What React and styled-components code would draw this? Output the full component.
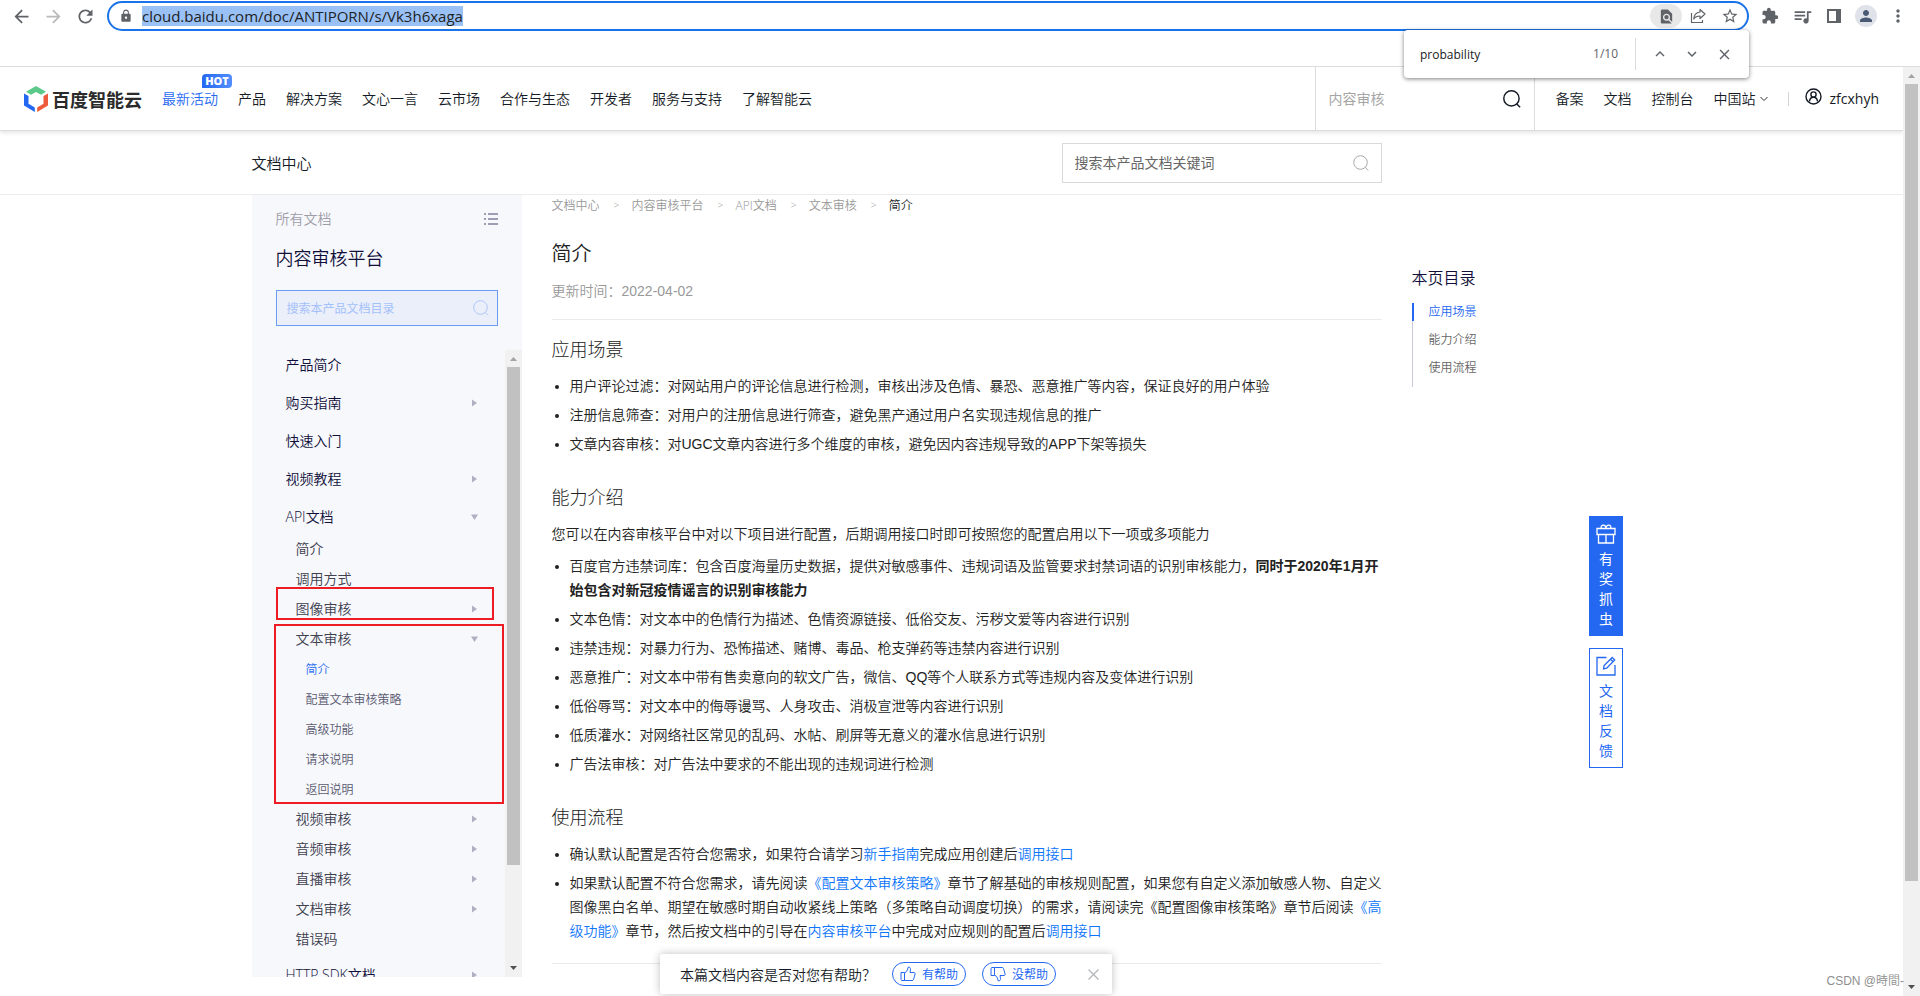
import React, { useState } from 'react';
import styled, { createGlobalStyle } from 'styled-components';
import {
    MdArrowBack,
    MdArrowForward,
    MdRefresh,
    MdLock,
    MdFindInPage,
    MdStarBorder,
    MdExtension,
    MdQueueMusic,
    MdPerson,
    MdMoreVert,
    MdKeyboardArrowUp,
    MdKeyboardArrowDown,
    MdClose,
} from 'react-icons/md';

const NAV_ITEMS = ['产品', '解决方案', '文心一言', '云市场', '合作与生态', '开发者', '服务与支持', '了解智能云'];

const MENU = [
    { name: '产品简介' },
    { name: '购买指南', arrow: 'right' },
    { name: '快速入门' },
    { name: '视频教程', arrow: 'right' },
    {
        name: 'API文档',
        arrow: 'down',
        children: [
            { name: '简介' },
            { name: '调用方式' },
            { name: '图像审核', arrow: 'right' },
            {
                name: '文本审核',
                arrow: 'down',
                children: [
                    { name: '简介', active: true },
                    { name: '配置文本审核策略' },
                    { name: '高级功能' },
                    { name: '请求说明' },
                    { name: '返回说明' },
                ],
            },
            { name: '视频审核', arrow: 'right' },
            { name: '音频审核', arrow: 'right' },
            { name: '直播审核', arrow: 'right' },
            { name: '文档审核', arrow: 'right' },
            { name: '错误码' },
        ],
    },
    { name: 'HTTP SDK文档', arrow: 'right' },
];

const CRUMBS = ['文档中心', '内容审核平台', 'API文档', '文本审核'];

function SearchIcon({ size = 16, width = 1 }) {
    return (
        <svg width={size} height={size} viewBox="0 0 16 16" fill="none" stroke="currentColor" strokeWidth={width}>
            <circle cx="7.5" cy="7.5" r="6.8" />
            <path d="M12 12.2l3.2 3.2" />
        </svg>
    );
}

function Arrow({ type }) {
    return (
        <svg width="7" height="8" viewBox="0 0 7 8" fill="#b0b0c3">
            {type === 'right' ? <path d="M1 .5l5 3.5-5 3.5z" /> : <path d="M0 1.5h7L3.5 7z" />}
        </svg>
    );
}

function Thumb({ down }) {
    return (
        <svg width="16" height="16" viewBox="0 0 16 16" fill="none" stroke="currentColor" strokeLinejoin="round">
            <g transform={down ? 'matrix(1 0 0 -1 0 16)' : undefined}>
                <path d="M1 6.5h3.5v8H1.8L1 13.8z" />
                <path d="M4.5 7.5L7.5 4l.6-2.8c1.6-.4 2.6.6 2.4 2.2L10 6.5h4c.9 0 1.3.6 1.1 1.4L13.5 13.5c-.2.7-.6 1-1.3 1H4.5z" />
            </g>
        </svg>
    );
}

function Menu({ items, level }) {
    return (
        <MenuList $level={level}>
            {items.map((item) => (
                <MenuItem key={item.name} $level={level}>
                    <MenuLink href="#" $level={level} $active={item.active}>
                        {item.name}
                        {item.arrow && <Arrow type={item.arrow} />}
                    </MenuLink>
                    {item.children && <Menu items={item.children} level={level + 1} />}
                </MenuItem>
            ))}
        </MenuList>
    );
}

function ScrollBar({ size }) {
    return (
        <Track>
            <svg width="17" height="17" viewBox="0 0 17 17" fill="#a3a3a3"><path d="M5 11h7L8.5 7z" /></svg>
            <TrackBody><TrackThumb $size={size} /></TrackBody>
            <svg width="17" height="17" viewBox="0 0 17 17" fill="#505050"><path d="M5 6h7l-3.5 4z" /></svg>
        </Track>
    );
}

function Browser() {
    const [url, setUrl] = useState('cloud.baidu.com/doc/ANTIPORN/s/Vk3h6xaga');
    const [keyword, setKeyword] = useState('probability');

    return (
        <Toolbar>
            <ToolButton $width={32} aria-label="back"><MdArrowBack size={21} /></ToolButton>
            <ToolButton $width={32} $color="#bababa" aria-label="forward"><MdArrowForward size={21} /></ToolButton>
            <ToolButton $width={32} aria-label="reload"><MdRefresh size={21} /></ToolButton>
            <Omnibox>
                <MdLock size={14} />
                <UrlInput aria-label="url" value={url} onChange={(e) => setUrl(e.target.value)} />
                <Spacer />
                <ToolButton $width={32} $fill="#e8e8e8" aria-label="find"><MdFindInPage size={17} /></ToolButton>
                <ToolButton $width={32} aria-label="share">
                    <svg width="16" height="16" viewBox="0 0 16 16" fill="none" stroke="currentColor" strokeWidth="1.2">
                        <path d="M1.500 5v9.500h11V12" />
                        <path d="M10 1.500l5 4.500-5 4.500V8C7 8 5 9 3.800 11 4 7.500 6 4.500 10 4z" strokeLinejoin="round" />
                    </svg>
                </ToolButton>
                <ToolButton $width={32} aria-label="bookmark"><MdStarBorder size={18} /></ToolButton>
            </Omnibox>
            <ToolGroup>
                <ToolButton $width={32} aria-label="extensions"><MdExtension size={18} /></ToolButton>
                <ToolButton $width={32} aria-label="media"><MdQueueMusic size={21} /></ToolButton>
                <ToolButton $width={32} aria-label="side panel">
                    <svg width="14" height="14" viewBox="0 0 14 14">
                        <path d="M1 1h12v12H1z" fill="none" stroke="currentColor" strokeWidth="2" />
                        <path d="M9 1h4v12H9z" fill="currentColor" />
                    </svg>
                </ToolButton>
                <ToolButton $width={32} aria-label="profile"><Avatar><MdPerson size={18} /></Avatar></ToolButton>
                <ToolButton $width={32} aria-label="more"><MdMoreVert size={20} /></ToolButton>
            </ToolGroup>
            <FindBar>
                <FindInput aria-label="find in page" value={keyword} onChange={(e) => setKeyword(e.target.value)} />
                <FindCount>1/10</FindCount>
                <ToolButton $width={32} aria-label="previous"><MdKeyboardArrowUp size={18} /></ToolButton>
                <ToolButton $width={32} aria-label="next"><MdKeyboardArrowDown size={18} /></ToolButton>
                <ToolButton $width={32} aria-label="close"><MdClose size={17} /></ToolButton>
            </FindBar>
        </Toolbar>
    );
}

function Header() {
    return (
        <HeaderBar>
            <Logo href="#">
                <svg width="24" height="26" viewBox="0 0 24 26">
                    <path d="M12 0l10 5.700-5 3L12 6 7 8.700l-5-3z" fill="#5bc98a" />
                    <path d="M0 7.500l4.500 2.600v7.700l6.300 3.700V26L0 19.500z" fill="#2468f2" />
                    <path d="M24 7.500l-4.500 2.600v7.700l-6.300 3.700V26L24 19.500z" fill="#ee5b3c" />
                </svg>
                百度智能云
            </Logo>
            <NavLinks>
                <NavLink href="#" $active>最新活动<HotBadge>HOT</HotBadge></NavLink>
                {NAV_ITEMS.map((name) => <NavLink href="#" key={name}>{name}</NavLink>)}
            </NavLinks>
            <HeaderSearch>
                <HeaderInput aria-label="搜索" placeholder="内容审核" />
                <SearchIcon size={18} width={1.3} />
            </HeaderSearch>
            <UserLinks>
                <NavLink href="#">备案</NavLink>
                <NavLink href="#">文档</NavLink>
                <NavLink href="#">控制台</NavLink>
                <NavLink href="#">
                    中国站
                    <svg width="8" height="6" viewBox="0 0 8 6" fill="none" stroke="#333"><path d="M.5 1L4 4.5 7.5 1" /></svg>
                </NavLink>
                <Divider />
                <UserName href="#">
                    <svg width="17" height="17" viewBox="0 0 17 17" fill="none" stroke="#151b26" strokeWidth="1.4">
                        <circle cx="8.5" cy="8.5" r="7.5" />
                        <circle cx="8.5" cy="6.5" r="2.6" />
                        <path d="M4.500 13.500C4.700 10.500 6 9.200 8.500 9.200s3.800 1.300 4 4.300" />
                    </svg>
                    zfcxhyh
                </UserName>
            </UserLinks>
        </HeaderBar>
    );
}

function Article() {
    return (
        <ArticleBox>
            <Breadcrumb>
                {CRUMBS.map((name) => (
                    <React.Fragment key={name}>
                        <Crumb href="#">{name}</Crumb>
                        <CrumbMark>&gt;</CrumbMark>
                    </React.Fragment>
                ))}
                <Crumb href="#" $current>简介</Crumb>
            </Breadcrumb>
            <Title>简介</Title>
            <UpdateTime>更新时间：2022-04-02</UpdateTime>
            <Line />
            <SubTitle $first>应用场景</SubTitle>
            <List>
                <ListItem>用户评论过滤：对网站用户的评论信息进行检测，审核出涉及色情、暴恐、恶意推广等内容，保证良好的用户体验</ListItem>
                <ListItem>注册信息筛查：对用户的注册信息进行筛查，避免黑产通过用户名实现违规信息的推广</ListItem>
                <ListItem>文章内容审核：对UGC文章内容进行多个维度的审核，避免因内容违规导致的APP下架等损失</ListItem>
            </List>
            <SubTitle>能力介绍</SubTitle>
            <Paragraph>您可以在内容审核平台中对以下项目进行配置，后期调用接口时即可按照您的配置启用以下一项或多项能力</Paragraph>
            <List>
                <ListItem>
                    百度官方违禁词库：包含百度海量历史数据，提供对敏感事件、违规词语及监管要求封禁词语的识别审核能力，
                    <strong>同时于2020年1月开始包含对新冠疫情谣言的识别审核能力</strong>
                </ListItem>
                <ListItem>文本色情：对文本中的色情行为描述、色情资源链接、低俗交友、污秽文爱等内容进行识别</ListItem>
                <ListItem>违禁违规：对暴力行为、恐怖描述、赌博、毒品、枪支弹药等违禁内容进行识别</ListItem>
                <ListItem>恶意推广：对文本中带有售卖意向的软文广告，微信、QQ等个人联系方式等违规内容及变体进行识别</ListItem>
                <ListItem>低俗辱骂：对文本中的侮辱谩骂、人身攻击、消极宣泄等内容进行识别</ListItem>
                <ListItem>低质灌水：对网络社区常见的乱码、水帖、刷屏等无意义的灌水信息进行识别</ListItem>
                <ListItem>广告法审核：对广告法中要求的不能出现的违规词进行检测</ListItem>
            </List>
            <SubTitle>使用流程</SubTitle>
            <List>
                <ListItem>
                    确认默认配置是否符合您需求，如果符合请学习<TextLink href="#">新手指南</TextLink>完成应用创建后<TextLink href="#">调用接口</TextLink>
                </ListItem>
                <ListItem>
                    如果默认配置不符合您需求，请先阅读<TextLink href="#">《配置文本审核策略》</TextLink>章节了解基础的审核规则配置，如果您有自定义添加敏感人物、自定义图像黑白名单、期望在敏感时期自动收紧线上策略（多策略自动调度切换）的需求，请阅读完《配置图像审核策略》章节后阅读<TextLink href="#">《高级功能》</TextLink>章节，然后按文档中的引导在<TextLink href="#">内容审核平台</TextLink>中完成对应规则的配置后<TextLink href="#">调用接口</TextLink>
                </ListItem>
            </List>
            <Line />
        </ArticleBox>
    );
}

function App() {
    return (
        <>
            <GlobalStyle />
            <Screen>
                <Browser />
                <Viewport>
                    <Page>
                        <Header />
                        <DocBar>
                            <DocBarInner>
                                <DocHome href="#">文档中心</DocHome>
                                <SearchBox>
                                    <SearchInput aria-label="搜索本产品文档关键词" placeholder="搜索本产品文档关键词" />
                                    <SearchIcon />
                                </SearchBox>
                            </DocBarInner>
                        </DocBar>
                        <Content>
                            <Sidebar>
                                <SidebarTop>
                                    <AllDocs href="#">
                                        所有文档
                                        <svg width="14" height="12" viewBox="0 0 14 12" fill="#9f9db3">
                                            <path d="M0 0h2v2H0zM4 0h10v2H4zM0 5h2v2H0zM4 5h10v2H4zM0 10h2v2H0zM4 10h10v2H4z" />
                                        </svg>
                                    </AllDocs>
                                    <ProductName>内容审核平台</ProductName>
                                    <MenuSearch>
                                        <MenuInput aria-label="搜索本产品文档目录" placeholder="搜索本产品文档目录" />
                                        <SearchIcon />
                                    </MenuSearch>
                                </SidebarTop>
                                <MenuScroll>
                                    <Menu items={MENU} level={1} />
                                    <ScrollBar size="84%" />
                                </MenuScroll>
                                <RedMark $top={392} $left={24} $width={218} $height={33} />
                                <RedMark $top={429} $left={22} $width={230} $height={180} />
                            </Sidebar>
                            <Article />
                            <Toc>
                                <TocTitle>本页目录</TocTitle>
                                <TocList>
                                    <TocLink href="#" $active>应用场景</TocLink>
                                    <TocLink href="#">能力介绍</TocLink>
                                    <TocLink href="#">使用流程</TocLink>
                                </TocList>
                            </Toc>
                        </Content>
                    </Page>
                    <ScrollBar size="89%" />
                </Viewport>
                <FloatButtons>
                    <FloatButton $fill>
                        <svg width="20" height="20" viewBox="0 0 20 20" fill="none" stroke="currentColor" strokeWidth="1.3">
                            <path d="M1 4.500h18v6H1zM2.500 10.500h15V19h-15zM10 10.500V19" />
                            <path d="M5.500 4.500C4.500 3 5.500 1.200 7.300 1.200 9 1.200 10 2.500 10 4.500c0-2 1-3.300 2.700-3.300 1.800 0 2.800 1.800 1.800 3.300" />
                        </svg>
                        有奖抓虫
                    </FloatButton>
                    <FloatButton>
                        <svg width="20" height="20" viewBox="0 0 20 20" fill="none" stroke="currentColor" strokeWidth="1.3">
                            <path d="M10.500 1.500H1V19h18V9" />
                            <path d="M7.500 13l.6-3.400L16.200 1.500l2.500 2.500-8 8.200zM14.500 3.200L17 5.700" />
                        </svg>
                        文档反馈
                    </FloatButton>
                </FloatButtons>
                <HelpBar>
                    <HelpText>本篇文档内容是否对您有帮助？</HelpText>
                    <HelpButton><Thumb />有帮助</HelpButton>
                    <HelpButton><Thumb down />没帮助</HelpButton>
                    <HelpClose aria-label="关闭">
                        <svg width="11" height="11" viewBox="0 0 11 11" stroke="#b4b6ba" strokeWidth="1.3"><path d="M.5.5l10 10M10.500.5l-10 10" /></svg>
                    </HelpClose>
                </HelpBar>
                <Watermark>CSDN @時間-</Watermark>
            </Screen>
        </>
    );
}

const GlobalStyle = createGlobalStyle`
    * {
        box-sizing: border-box;
    }

    body {
        margin: 0;
        background: #fff;
        color: #151b26;
        font-family: "Open Sans", "Noto Sans CJK SC", sans-serif;
        font-size: 14px;
        text-spacing-trim: space-all;
    }

    a {
        color: inherit;
        text-decoration: none;
    }

    button, input {
        margin: 0;
        padding: 0;
        border: 0;
        outline: 0;
        background: none;
        color: inherit;
        font-family: inherit;
    }

    ul, h1, h2, h3, p {
        margin: 0;
        padding: 0;
    }

    h1, h2, h3 {
        font-weight: 300;
    }

    svg {
        flex: none;
    }
`;

const Screen = styled.div`
    position: relative;
    display: flex;
    flex-direction: column;
    height: 100vh;
    overflow: hidden;
    font-weight: 350;
`;

const Toolbar = styled.div`
    position: relative;
    z-index: 2;
    display: flex;
    align-items: flex-start;
    height: 67px;
    padding: 1px 6px 1px 5px;
    border-bottom: 1px solid #dadce0;
    color: #5f6368;
`;

const ToolButton = styled.button`
    display: flex;
    flex: none;
    align-items: center;
    justify-content: center;
    width: ${(props) => props.$width}px;
    height: ${(props) => (props.$fill ? 24 : 30)}px;
    border-radius: 12px;
    background: ${(props) => props.$fill || 'none'};
    color: ${(props) => props.$color || 'inherit'};
`;

const ToolGroup = styled.div`
    display: flex;
    margin-left: 5px;
`;

const Omnibox = styled.div`
    display: flex;
    flex: 1;
    align-items: center;
    height: 30px;
    margin-left: 6px;
    padding: 0 1px 0 10px;
    border: 2px solid #1a73e8;
    border-radius: 15px;
`;

const UrlInput = styled.input`
    field-sizing: content;
    height: 20px;
    margin-left: 9px;
    background: #9ac1f5;
    color: #202124;
    font-size: 15px;
`;

const Spacer = styled.div`
    flex: 1;
`;

const Avatar = styled.span`
    display: flex;
    align-items: center;
    justify-content: center;
    width: 22px;
    height: 22px;
    border-radius: 50%;
    background: #dfe2e9;
    color: #4a5a75;
`;

const FindBar = styled.div`
    position: absolute;
    top: 30px;
    right: 171px;
    display: flex;
    align-items: center;
    width: 345px;
    height: 48px;
    padding: 0 9px 0 16px;
    border-radius: 4px;
    background: #fff;
    box-shadow: 0 1px 4px rgba(0, 0, 0, 0.5);
`;

const FindInput = styled.input`
    flex: 1;
    min-width: 0;
    color: #202124;
    font-size: 12px;
`;

const FindCount = styled.span`
    height: 32px;
    margin-right: 8px;
    padding-right: 17px;
    border-right: 1px solid #dadce0;
    font-size: 12px;
    font-weight: 400;
    line-height: 32px;
`;

const Viewport = styled.div`
    display: flex;
    flex: 1;
    min-height: 0;
`;

const Page = styled.div`
    flex: 1;
    min-width: 0;
    overflow: hidden;
`;

const Track = styled.div`
    display: flex;
    flex: none;
    flex-direction: column;
    width: 17px;
    background: #f1f1f1;
`;

const TrackBody = styled.div`
    flex: 1;
    padding: 0 2px;
`;

const TrackThumb = styled.div`
    height: ${(props) => props.$size};
    background: #c1c1c1;
`;

const HeaderBar = styled.header`
    position: relative;
    display: flex;
    align-items: center;
    height: 64px;
    padding-left: 24px;
    border-bottom: 1px solid #dcdcdc;
    box-shadow: 0 2px 4px rgba(0, 0, 0, 0.1);
`;

const Logo = styled.a`
    display: flex;
    align-items: center;
    gap: 4px;
    color: #2b2b2b;
    font-size: 18px;
    font-weight: 700;
`;

const NavLinks = styled.nav`
    display: flex;
    flex: 1;
    gap: 20px;
    margin-left: 20px;
`;

const NavLink = styled.a`
    position: relative;
    display: flex;
    align-items: center;
    gap: 4px;
    color: ${(props) => (props.$active ? '#2468f2' : 'inherit')};
    line-height: 20px;
    white-space: nowrap;
`;

const HotBadge = styled.span`
    position: absolute;
    top: -15px;
    right: -14px;
    width: 30px;
    border-radius: 4px 4px 4px 0;
    background: linear-gradient(90deg, #2468f2, #528eff);
    color: #fff;
    font-size: 11px;
    font-weight: 800;
    line-height: 14px;
    text-align: center;
`;

const HeaderSearch = styled.div`
    display: flex;
    align-items: center;
    width: 220px;
    height: 63px;
    padding: 0 13px;
    border: solid #dcdcdc;
    border-width: 0 1px;
`;

const HeaderInput = styled.input`
    flex: 1;
    min-width: 0;
    font-size: 14px;

    &::placeholder {
        color: #a5a5a5;
    }
`;

const UserLinks = styled.div`
    display: flex;
    align-items: center;
    gap: 20px;
    padding: 0 24px 0 21px;
`;

const Divider = styled.span`
    width: 1px;
    height: 14px;
    background: #d4d4d4;
`;

const UserName = styled.a`
    display: flex;
    align-items: center;
    gap: 8px;
    margin-left: -4px;
    font-weight: 400;

    svg {
        margin-bottom: 4px;
    }
`;

const DocBar = styled.div`
    height: 64px;
    border-bottom: 1px solid #ececec;
`;

const DocBarInner = styled.div`
    display: flex;
    align-items: center;
    justify-content: space-between;
    max-width: 1400px;
    height: 100%;
    margin: 0 auto;
    padding-right: 270px;
`;

const DocHome = styled.a`
    font-size: 15px;
`;

const SearchBox = styled.div`
    display: flex;
    align-items: center;
    width: 320px;
    height: 40px;
    padding: 0 12px;
    border: 1px solid #d9d9d9;
    color: #a8a8a8;
`;

const SearchInput = styled.input`
    flex: 1;
    min-width: 0;
    font-size: 14px;

    &::placeholder {
        color: #666;
    }
`;

const Content = styled.div`
    display: flex;
    align-items: flex-start;
    max-width: 1400px;
    margin: 0 auto;
`;

const Sidebar = styled.aside`
    position: relative;
    display: flex;
    flex: none;
    flex-direction: column;
    width: 270px;
    height: calc(100vh - 214px);
    background: #f7f8fc;
`;

const SidebarTop = styled.div`
    padding: 14px 24px 24px;
`;

const AllDocs = styled.a`
    display: flex;
    align-items: center;
    justify-content: space-between;
    color: #9f9da8;
    line-height: 20px;
`;

const ProductName = styled.h3`
    margin: 16px 0 18px;
    color: #100f3a;
    font-size: 18px;
    font-weight: 350;
    line-height: 27px;
`;

const MenuSearch = styled.div`
    display: flex;
    align-items: center;
    height: 36px;
    padding: 0 8px 0 10px;
    border: 1px solid #6a9cf2;
    background: #ebeffa;
    color: #adc8f8;
`;

const MenuInput = styled.input`
    flex: 1;
    min-width: 0;
    font-size: 12px;

    &::placeholder {
        color: #a5c1fa;
    }
`;

const MenuScroll = styled.div`
    display: flex;
    flex: 1;
    min-height: 0;
    overflow: hidden;

    & > ul {
        flex: 1;
    }
`;

const MenuList = styled.ul`
    margin: ${(props) => ['0', '2px 0 -2px', '1px 0 -1px'][props.$level - 1]};
    list-style: none;
`;

const MenuItem = styled.li`
    margin-bottom: ${(props) => (props.$level === 1 ? 8 : 0)}px;
`;

const MenuLink = styled.a`
    display: flex;
    align-items: center;
    justify-content: space-between;
    padding: 0 27px 0 ${(props) => 24 + props.$level * 10}px;
    color: ${(props) => (props.$active ? '#2468f2' : ['#100f3a', '#40404f', '#5a5a70'][props.$level - 1])};
    font-size: ${(props) => (props.$level === 3 ? 12 : 14)}px;
    line-height: 30px;
`;

const RedMark = styled.div`
    position: absolute;
    top: ${(props) => props.$top}px;
    left: ${(props) => props.$left}px;
    width: ${(props) => props.$width}px;
    height: ${(props) => props.$height}px;
    border: 2px solid #ed1c24;
    pointer-events: none;
`;

const ArticleBox = styled.article`
    flex: 1;
    min-width: 0;
    margin: 0 30px;
    color: #222;
    font-family: "Liberation Sans", "Noto Sans CJK SC", sans-serif;
`;

const Breadcrumb = styled.nav`
    display: flex;
    align-items: center;
    gap: 14px;
    height: 20px;
    color: #999;
    font-family: "Open Sans", "Noto Sans CJK SC", sans-serif;
    font-size: 12px;
`;

const Crumb = styled.a`
    color: ${(props) => (props.$current ? '#151b26' : 'inherit')};
`;

const CrumbMark = styled.span`
    width: 4px;
    font-size: 10px;
`;

const Title = styled.h1`
    margin-top: 24px;
    font-size: 20px;
    font-weight: 350;
    line-height: 30px;
`;

const UpdateTime = styled.p`
    margin: 12px 0 18px;
    color: #999;
    line-height: 20px;
`;

const Line = styled.div`
    height: 1px;
    background: #eaeaea;
`;

const SubTitle = styled.h2`
    margin: ${(props) => (props.$first ? 17 : 29)}px 0 11px;
    font-size: 18px;
    line-height: 26px;
`;

const Paragraph = styled.p`
    margin-bottom: 8px;
    line-height: 24px;
`;

const List = styled.ul`
    padding-left: 18px;
    margin-bottom: 20px;

    strong {
        font-weight: 700;
    }
`;

const ListItem = styled.li`
    line-height: 24px;

    & + & {
        margin-top: 5px;
    }
`;

const TextLink = styled.a`
    color: #0d75fb;
`;

const Toc = styled.nav`
    flex: none;
    width: 240px;
    padding-top: 71px;
`;

const TocTitle = styled.h3`
    color: #100f3a;
    font-size: 16px;
    font-weight: 350;
    line-height: 24px;
`;

const TocList = styled.div`
    display: flex;
    flex-direction: column;
    gap: 10px;
    height: 84px;
    margin-top: 13px;
    border-left: 1px solid #c9c9dc;
`;

const TocLink = styled.a`
    margin-left: -1px;
    padding-left: 15px;
    border-left: 2px solid ${(props) => (props.$active ? '#2468f2' : 'transparent')};
    color: ${(props) => (props.$active ? '#2468f2' : '#666')};
    font-size: 12px;
    line-height: 18px;
`;

const FloatButtons = styled.div`
    position: absolute;
    top: 516px;
    right: 297px;
    display: flex;
    flex-direction: column;
    gap: 12px;
`;

const FloatButton = styled.button`
    display: flex;
    flex-direction: column;
    align-items: center;
    gap: 5px;
    width: 34px;
    height: 120px;
    padding: 7px 9px;
    border: 1px solid #2468f2;
    background: ${(props) => (props.$fill ? '#2468f2' : '#fff')};
    color: ${(props) => (props.$fill ? '#fff' : '#2468f2')};
    font-size: 14px;
    line-height: 20px;
`;

const HelpBar = styled.div`
    position: absolute;
    right: 808px;
    bottom: 2px;
    display: flex;
    align-items: center;
    width: 452px;
    height: 40px;
    padding: 0 12px 0 20px;
    border-radius: 2px;
    background: #fff;
    box-shadow: 0 0 8px rgba(0, 0, 0, 0.25);
`;

const HelpText = styled.span`
    margin-right: auto;
`;

const HelpButton = styled.button`
    display: flex;
    align-items: center;
    justify-content: center;
    gap: 6px;
    width: 74px;
    height: 24px;
    margin-right: 16px;
    border: 1px solid #2468f2;
    border-radius: 12px;
    color: #2468f2;
    font-size: 12px;
`;

const HelpClose = styled.button`
    display: flex;
    margin: 0 1px 0 16px;
`;

const Watermark = styled.span`
    position: absolute;
    right: 16px;
    bottom: 5px;
    color: #8f8f8f;
    font-family: "Liberation Sans", "Noto Sans CJK SC", sans-serif;
    font-size: 12px;
    line-height: 20px;
`;

export default App;
